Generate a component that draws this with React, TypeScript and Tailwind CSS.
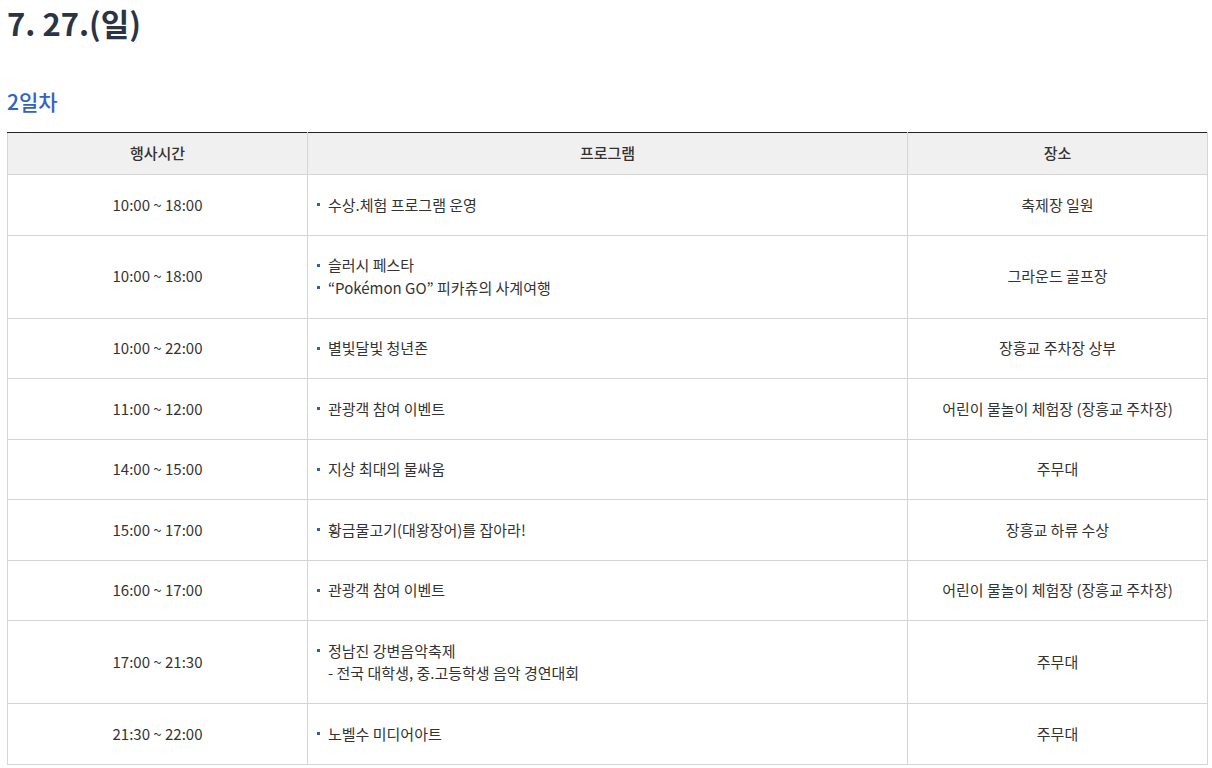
import React from "react";

const rows: { time: string; items: string[]; sub?: string; place: string }[] = [
  { time: "10:00 ~ 18:00", items: ["수상.체험 프로그램 운영"], place: "축제장 일원" },
  { time: "10:00 ~ 18:00", items: ["슬러시 페스타", "“Pokémon GO” 피카츄의 사계여행"], place: "그라운드 골프장" },
  { time: "10:00 ~ 22:00", items: ["별빛달빛 청년존"], place: "장흥교 주차장 상부" },
  { time: "11:00 ~ 12:00", items: ["관광객 참여 이벤트"], place: "어린이 물놀이 체험장 (장흥교 주차장)" },
  { time: "14:00 ~ 15:00", items: ["지상 최대의 물싸움"], place: "주무대" },
  { time: "15:00 ~ 17:00", items: ["황금물고기(대왕장어)를 잡아라!"], place: "장흥교 하류 수상" },
  { time: "16:00 ~ 17:00", items: ["관광객 참여 이벤트"], place: "어린이 물놀이 체험장 (장흥교 주차장)" },
  { time: "17:00 ~ 21:30", items: ["정남진 강변음악축제"], sub: "- 전국 대학생, 중.고등학생 음악 경연대회", place: "주무대" },
  { time: "21:30 ~ 22:00", items: ["노벨수 미디어아트"], place: "주무대" },
];

export default function App() {
  return (
    <div
      className="bg-white w-[1212px] h-[768px] overflow-hidden text-[#333]"
      style={{ fontFamily: '"Noto Sans CJK KR", "Noto Sans", sans-serif' }}
    >
      <h1 className="pl-[7px] pt-[1px] text-[31px] leading-[44px] font-bold text-[#2b3445]">
        7. 27.(일)
      </h1>
      <h2 className="pl-[7px] mt-[40px] text-[21px] leading-[32px] font-medium text-[#2f64c0]">2일차</h2>
      <table className="ml-[7px] mt-[15px] w-[1200px] table-fixed border-collapse text-[15px]">
        <colgroup>
          <col className="w-[300px]" />
          <col className="w-[600px]" />
          <col className="w-[300px]" />
        </colgroup>
        <thead>
          <tr>
            {["행사시간", "프로그램", "장소"].map((h) => (
              <th
                key={h}
                className="h-[42px] p-0 bg-[#f0f0f0] border border-[#d5d5d5] border-t-[#222] font-medium text-[15px] text-[#333] text-center"
              >
                {h}
              </th>
            ))}
          </tr>
        </thead>
        <tbody>
          {rows.map((r, i) => (
            <tr key={i}>
              <td className="border border-[#d5d5d5] text-center py-[18.5px] leading-[22.5px]">{r.time}</td>
              <td className="border border-[#d5d5d5] py-[18.5px] pl-[9px] leading-[22.5px]">
                {r.items.map((it, j) => (
                  <div key={j} className="flex items-center">
                    <span className="w-[3px] h-[3px] bg-[#2f5fb0] mr-[8px] shrink-0" />
                    <span>{it}</span>
                  </div>
                ))}
                {r.sub && <div className="pl-[11px]">{r.sub}</div>}
              </td>
              <td className="border border-[#d5d5d5] text-center py-[18.5px] leading-[22.5px]">{r.place}</td>
            </tr>
          ))}
        </tbody>
      </table>
    </div>
  );
}
